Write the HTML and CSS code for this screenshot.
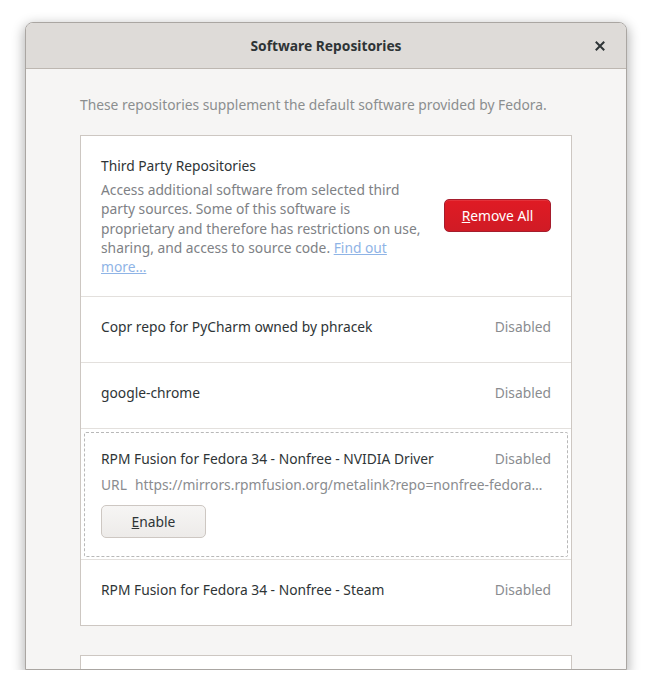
FILE: index.html
```html
<!DOCTYPE html>
<html>
<head>
<meta charset="utf-8">
<link rel="stylesheet" href="styles.css">
</head>
<body>
<div class="window">
  <header class="headerbar">
    <span></span>
    <h1 class="title">Software Repositories</h1>
    <button class="close" aria-label="Close">
      <svg width="10" height="10" viewBox="0 0 10 10"><path d="M1.5 1.5 L8.5 8.5 M8.5 1.5 L1.5 8.5" stroke="#2e3436" stroke-width="2" stroke-linecap="square"/></svg>
    </button>
  </header>
  <main class="content">
    <p class="intro">These repositories supplement the default software provided by Fedora.</p>
    <section class="card">
      <div class="row header-row">
        <div class="header-text">
          <div class="row-title">Third Party Repositories</div>
          <div class="desc">Access additional software from selected third<br>party sources. Some of this software is<br>proprietary and therefore has restrictions on use,<br>sharing, and access to source code. <a href="#" class="link">Find out<br>more…</a></div>
        </div>
        <button class="btn btn-red"><u>R</u>emove All</button>
      </div>
      <div class="row simple">
        <span class="row-title">Copr repo for PyCharm owned by phracek</span>
        <span class="status">Disabled</span>
      </div>
      <div class="row simple">
        <span class="row-title">google-chrome</span>
        <span class="status">Disabled</span>
      </div>
      <div class="row expanded">
        <div class="focus">
          <div class="line">
            <span class="row-title">RPM Fusion for Fedora 34 - Nonfree - NVIDIA Driver</span>
            <span class="status">Disabled</span>
          </div>
          <div class="url-line"><span class="url-label">URL</span><span class="url">https://mirrors.rpmfusion.org/metalink?repo=nonfree-fedora…</span></div>
          <button class="btn btn-normal"><u>E</u>nable</button>
        </div>
      </div>
      <div class="row simple">
        <span class="row-title">RPM Fusion for Fedora 34 - Nonfree - Steam</span>
        <span class="status">Disabled</span>
      </div>
    </section>
    <section class="card card2"></section>
  </main>
</div>
</body>
</html>
```
FILE: styles.css
```css
* { box-sizing: border-box; }
html, body { margin: 0; padding: 0; background: #ffffff; }
body {
  font-family: "Noto Sans", "Open Sans", sans-serif;
  font-size: 13.8px;
  color: #2e3436;
}
.window {
  margin: 22px 0 0 25px;
  width: 602px;
  height: 648px;
  border: 1px solid #aaa6a2;
  border-radius: 8px 8px 0 0;
  overflow: hidden;
  background: #f6f5f4;
  box-shadow: 0 4px 12px 2px rgba(0,0,0,0.28);
  display: flex;
  flex-direction: column;
}
.headerbar {
  flex: 0 0 46px;
  background: #dedbd8;
  border-bottom: 1px solid #bdb7b1;
  display: grid;
  grid-template-columns: 1fr auto 1fr;
  align-items: center;
}
.title {
  margin: 0;
  font-size: 13.8px;
  font-weight: bold;
  color: #2e3436;
}
.close {
  justify-self: end;
  margin-right: 14px;
  width: 24px;
  height: 24px;
  border: 0;
  background: transparent;
  padding: 0;
  display: flex;
  align-items: center;
  justify-content: center;
}
.content {
  flex: 1;
  padding: 26px 54px 0;
  overflow: hidden;
}
.intro {
  margin: 0 0 20px;
  line-height: 20px;
  color: #8b8e8f;
}
.card {
  background: #ffffff;
  border: 1px solid #cdc7c2;
}
.card2 { margin-top: 29px; height: 60px; }
.row {
  border-top: 1px solid #e3e0dd;
  padding: 0 20px;
}
.row:first-child { border-top: 0; }
.header-row {
  height: 160px;
  padding-bottom: 2px;
  display: flex;
  align-items: center;
  justify-content: space-between;
}
.header-text { width: 330px; align-self: flex-start; margin-top: 20px; white-space: nowrap; }
.row-title { line-height: 20px; color: #2e3436; }
.desc {
  margin-top: 4px;
  line-height: 19.3px;
  color: #7e8185;
}
.link { color: #8fb4e6; text-decoration: underline; }
.btn {
  font: inherit;
  height: 33px;
  border-radius: 5px;
  padding: 0 16px;
}
.btn-red {
  width: 107px;
  color: #ffffff;
  background: linear-gradient(#e01b24, #d01b25);
  border: 1px solid #a51d2d;
  box-shadow: inset 0 1px rgba(255,255,255,0.1);
}
.simple {
  height: 66px;
  padding-bottom: 6px;
  display: flex;
  align-items: center;
  justify-content: space-between;
}
.status { color: #8a8c8f; }
.expanded { padding: 3px 3px 2px; }
.focus {
  border: 1px dashed #b8b8b8;
  border-radius: 2px;
  padding: 16px 16px 18px;
}
.line { display: flex; justify-content: space-between; }
.url-line {
  margin-top: 6px;
  line-height: 20px;
  color: #8a8c8f;
  display: flex;
  gap: 8px;
  white-space: nowrap;
}
.url { overflow: hidden; text-overflow: ellipsis; min-width: 0; }
.btn-normal {
  margin-top: 10px;
  width: 105px;
  color: #2e3436;
  background: linear-gradient(#f6f5f4, #edebe9);
  border: 1px solid #cdc7c2;
}
```
